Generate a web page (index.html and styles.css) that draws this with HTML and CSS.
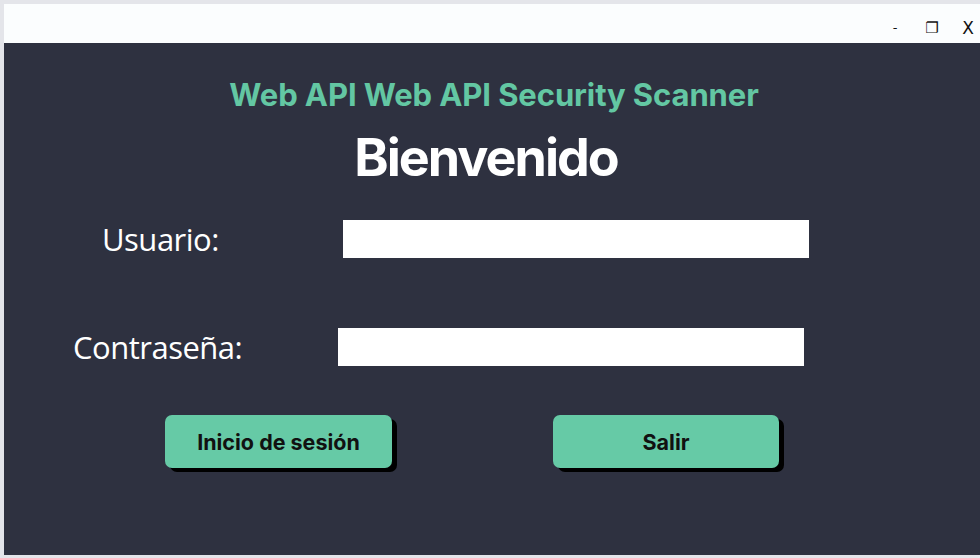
FILE: index.html
```html
<!DOCTYPE html>
<html lang="es">
<head>
<meta charset="utf-8">
<title>Web API Security Scanner</title>
<link rel="stylesheet" href="styles.css">
</head>
<body>
<div class="window">
  <div class="titlebar">
    <span class="ctl ctl-min">-</span>
    <span class="ctl ctl-max">❐</span>
    <span class="ctl ctl-close">X</span>
  </div>
  <div class="content">
    <h2 class="app-title">Web API Web API Security Scanner</h2>
    <h1 class="welcome">Bienvenido</h1>
    <div class="row row-user">
      <label class="label">Usuario:</label>
      <div class="field"></div>
    </div>
    <div class="row row-pass">
      <label class="label">Contraseña:</label>
      <div class="field"></div>
    </div>
    <div class="buttons">
      <button class="btn btn-login">Inicio de sesión</button>
      <button class="btn btn-exit">Salir</button>
    </div>
  </div>
</div>
</body>
</html>
```
FILE: styles.css
```css
html, body {
  margin: 0;
  padding: 0;
  width: 980px;
  height: 558px;
  overflow: hidden;
  background: #e4e5ea;
}
.window {
  margin: 4px 0 0 4px;
  width: 976px;
  height: 551px;
  display: flex;
  flex-direction: column;
}
.titlebar {
  height: 39px;
  background: #fbfdfe;
  display: flex;
  align-items: center;
  justify-content: flex-end;
  font-family: "DejaVu Sans", sans-serif;
  color: #111;
}
.ctl {
  display: inline-block;
  text-align: center;
  margin-top: 8px;
}
.ctl-min { font-size: 13px; width: 20px; margin-right: 17px; }
.ctl-max { font-size: 15px; width: 20px; margin-right: 16px; }
.ctl-close { font-size: 17px; width: 20px; margin-right: 2px; font-family: "DejaVu Sans", sans-serif; }
.content {
  flex: 1;
  background: #2e3140;
  font-family: "Inter", sans-serif;
}
.app-title {
  margin: 0;
  padding-top: 32px;
  padding-left: 4px;
  text-align: center;
  font-family: "Inter", sans-serif;
  font-weight: 700;
  font-size: 31px;
  line-height: 40px;
  letter-spacing: -0.1px;
  color: #63c7a3;
}
.welcome {
  margin: 15px 0 0 0;
  padding-right: 12px;
  text-align: center;
  font-family: "Inter", sans-serif;
  font-weight: 700;
  font-size: 52px;
  line-height: 56px;
  letter-spacing: -2px;
  color: #ffffff;
}
.row {
  display: flex;
  align-items: center;
  height: 38px;
}
.row-user { margin-top: 34px; padding-left: 98px; }
.row-pass { margin-top: 70px; padding-left: 69px; }
.label {
  color: #ffffff;
  font-family: "Open Sans", sans-serif;
  font-size: 31px;
  font-weight: 400;
  letter-spacing: -0.5px;
}
.row-user .label { width: 241px; }
.row-pass .label { width: 265px; }
.field {
  width: 466px;
  height: 38px;
  background: #ffffff;
}
.buttons {
  display: flex;
  margin-top: 49px;
  padding-left: 161px;
  gap: 161px;
}
.btn {
  width: 227px;
  height: 53px;
  border: none;
  border-radius: 7px;
  background: #66caa6;
  box-shadow: 5px 4px 0 #000;
  font-family: "Inter", sans-serif;
  font-weight: 700;
  font-size: 21.5px;
  color: #111;
  padding: 0;
}
.btn-exit { width: 226px; }
```
